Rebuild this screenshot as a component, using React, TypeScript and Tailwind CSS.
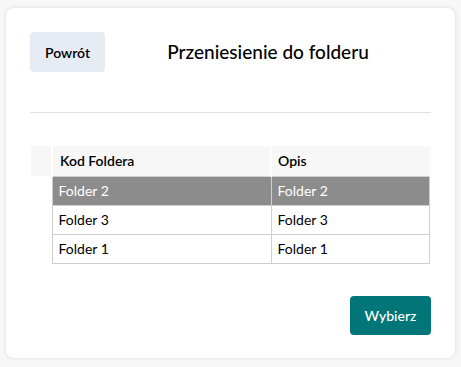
const rows = [
  { kod: 'Folder 2', opis: 'Folder 2', selected: true },
  { kod: 'Folder 3', opis: 'Folder 3', selected: false },
  { kod: 'Folder 1', opis: 'Folder 1', selected: false },
]

export default function App() {
  return (
    <div className="min-h-[367px] bg-[#f7f7f7] pt-[8px] pb-[8px] pl-[6px] pr-[6px] font-['Lato',sans-serif] text-black">
      <div className="rounded-lg bg-white px-[24px] pt-[24px] pb-[23px] shadow-[0_0_4px_rgba(0,0,0,0.12)]">
        <div className="flex items-center">
          <button
            type="button"
            className="h-[40px] w-[75px] rounded-[4px] bg-[#e7ebf4] text-[14px] font-semibold"
          >
            Powrót
          </button>
          <h1 className="flex-1 text-center text-[19px] font-medium">
            Przeniesienie do folderu
          </h1>
        </div>

        <div className="mt-[40px] h-px bg-[#e2e2e2]" />

        <table className="mt-[33px] ml-[1px] w-[399px] border-collapse text-[14px]">
          <thead>
            <tr className="bg-[#f7f7f7]">
              <th className="h-[30px] w-[21px] border-r-2 border-white" />
              <th className="w-[219px] border-r-2 border-white px-[7px] text-left font-semibold">
                Kod Foldera
              </th>
              <th className="px-[6px] text-left font-semibold">Opis</th>
            </tr>
          </thead>
          <tbody>
            {rows.map((r) => (
              <tr key={r.kod}>
                <td />
                <td
                  className={
                    'h-[29px] border border-[#cfcfcf] px-[6px] ' +
                    (r.selected ? 'bg-[#8c8c8c] text-white' : '')
                  }
                >
                  {r.kod}
                </td>
                <td
                  className={
                    'border border-[#cfcfcf] px-[6px] ' +
                    (r.selected ? 'bg-[#8c8c8c] text-white' : '')
                  }
                >
                  {r.opis}
                </td>
              </tr>
            ))}
          </tbody>
        </table>

        <div className="mt-[32px] flex justify-end">
          <button
            type="button"
            className="h-[39px] w-[81px] rounded-[4px] bg-[#007679] text-[14px] font-medium text-white"
          >
            Wybierz
          </button>
        </div>
      </div>
    </div>
  )
}
